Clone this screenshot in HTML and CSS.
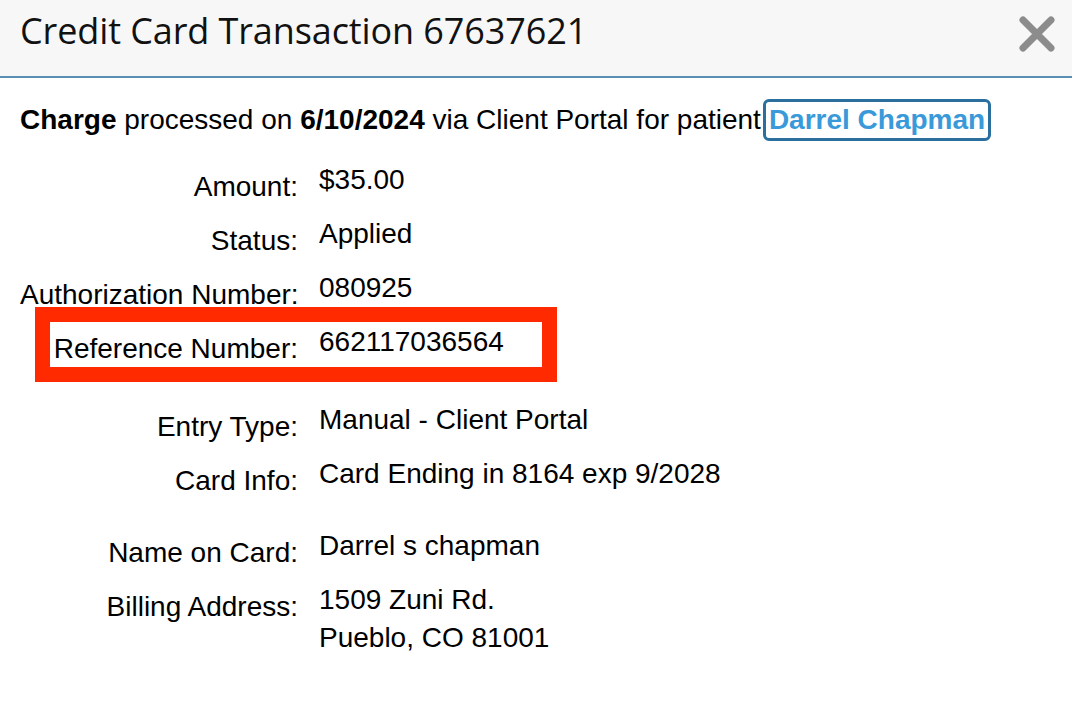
FILE: index.html
```html
<!DOCTYPE html>
<html>
<head>
<meta charset="utf-8">
<link rel="stylesheet" href="styles.css">
</head>
<body>
<div class="dialog">
  <div class="header">
    <h1 class="title">Credit Card Transaction 67637621</h1>
    <button class="close" aria-label="Close">
      <svg width="38" height="38" viewBox="0 0 38 38"><path d="M5 5 L33 33 M33 5 L5 33" stroke="#8c8c8c" stroke-width="7" stroke-linecap="round"/></svg>
    </button>
  </div>
  <div class="content">
    <p class="summary"><b>Charge</b> processed on <b>6/10/2024</b> via Client Portal for patient<a class="patient" href="#">Darrel Chapman</a></p>
    <div class="rows">
      <div class="row"><span class="label">Amount:</span><span class="value">$35.00</span></div>
      <div class="row"><span class="label">Status:</span><span class="value">Applied</span></div>
      <div class="row"><span class="label">Authorization Number:</span><span class="value">080925</span></div>
      <div class="row highlight"><span class="label">Reference Number:</span><span class="value">662117036564</span><span class="mark"></span></div>
      <div class="row gap"><span class="label">Entry Type:</span><span class="value">Manual - Client Portal</span></div>
      <div class="row"><span class="label">Card Info:</span><span class="value">Card Ending in 8164 exp 9/2028</span></div>
      <div class="row gap2"><span class="label">Name on Card:</span><span class="value">Darrel s chapman</span></div>
      <div class="row"><span class="label">Billing Address:</span><span class="value">1509 Zuni Rd.<br>Pueblo, CO 81001</span></div>
    </div>
  </div>
</div>
</body>
</html>
```
FILE: styles.css
```css
html, body { margin: 0; padding: 0; background: #fff; }
body { font-family: "Liberation Sans", Arial, sans-serif; color: #000; }
.dialog { width: 1072px; height: 702px; overflow: hidden; }
.header {
  height: 76px;
  background: #f7f7f7;
  border-bottom: 2px solid #5b8fb1;
  display: flex;
  align-items: center;
  justify-content: space-between;
  padding: 0 16px 0 20px;
}
.title {
  margin: 0;
  font-family: "Open Sans", sans-serif;
  font-weight: 400;
  font-size: 36px;
  letter-spacing: -0.1px;
  color: #111;
  position: relative;
  top: -8px;
}
.close { background: none; border: 0; padding: 0; width: 38px; height: 38px; display: flex; position: relative; top: -4px; }
.content { padding: 0 20px; }
.summary { margin: 21px 0 0; font-size: 28px; line-height: 42px; white-space: nowrap; }
.patient {
  display: inline-block;
  margin-left: 2px;
  color: #3a9ad9;
  font-weight: bold;
  text-decoration: none;
  border: 3px solid #2a6f9e;
  border-radius: 6px;
  padding: 0 3px;
  line-height: 36px;
}
.rows { margin-top: 27px; }
.row { display: flex; position: relative; height: 54px; font-size: 28px; }
.label { width: 278px; flex: none; text-align: right; padding-top: 3px; line-height: 32px; white-space: nowrap; }
.value { margin-left: 21px; line-height: 38px; margin-top: -7px; }
.row.gap { margin-top: 24px; }
.row.gap2 { margin-top: 18px; }
.mark {
  position: absolute;
  left: 15px;
  top: -23px;
  width: 492px;
  height: 45px;
  border: 15px solid #ff2a00;
}
```
